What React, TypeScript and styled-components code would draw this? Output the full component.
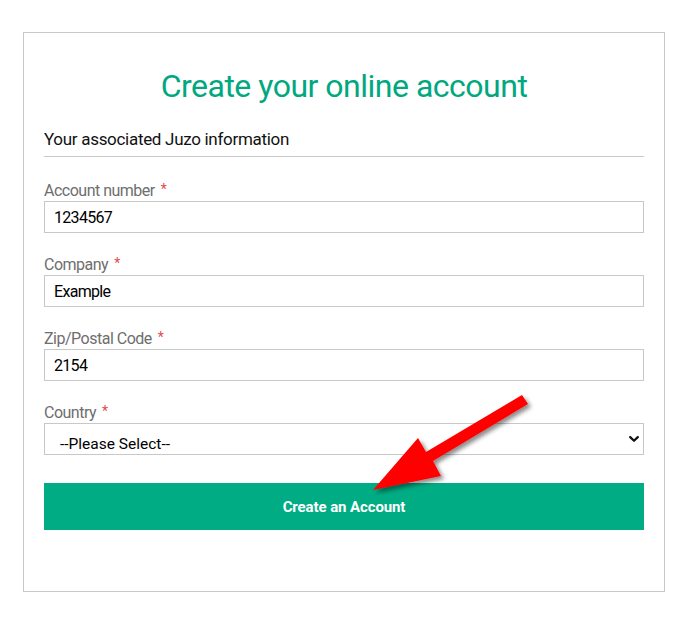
import React from "react";
import styled, { createGlobalStyle } from "styled-components";

const GlobalStyle = createGlobalStyle`
  html, body {
    margin: 0;
    padding: 0;
    background: #ffffff;
  }
  body {
    font-family: "Roboto", "Liberation Sans", sans-serif;
  }
`;

const Page = styled.div`
  width: 682px;
  height: 617px;
  padding: 32px 0 0 23px;
  box-sizing: border-box;
`;

const Card = styled.div`
  position: relative;
  width: 642px;
  height: 560px;
  box-sizing: border-box;
  border: 1px solid #c8c8c8;
  padding: 31px 20px 0 20px;
`;

const Title = styled.h1`
  margin: 0;
  text-align: center;
  font-family: "Roboto", sans-serif;
  font-weight: 400;
  font-size: 32px;
  letter-spacing: -0.5px;
  line-height: 44px;
  color: #00a880;
`;

const SectionHeading = styled.h2`
  margin: 20px 0 0 0;
  padding-bottom: 5px;
  border-bottom: 1px solid #c8c8c8;
  font-family: "Roboto", sans-serif;
  font-weight: 400;
  font-size: 17px;
  letter-spacing: -0.3px;
  line-height: 23px;
  color: #111111;
`;

const Form = styled.form`
  display: flex;
  flex-direction: column;
  margin-top: 21px;
`;

const Field = styled.div`
  display: flex;
  flex-direction: column;
  margin-bottom: 19px;
`;

const Label = styled.label`
  display: block;
  height: 22px;
  margin-bottom: 1px;
  font-size: 16px;
  letter-spacing: -0.5px;
  line-height: 22px;
  color: #6e6e6e;
`;

const Required = styled.span`
  color: #e24b4b;
  font-size: 14px;
  margin-left: 6px;
  vertical-align: 2px;
`;

const TextInput = styled.input`
  height: 32px;
  box-sizing: border-box;
  border: 1px solid #c8c8c8;
  border-radius: 0;
  padding: 1px 9px 0 9px;
  font-family: "Roboto", sans-serif;
  font-size: 16px;
  letter-spacing: -0.7px;
  color: #000000;
  background: #ffffff;
  outline: none;
`;

const SelectWrap = styled.div`
  position: relative;
  height: 32px;
`;

const Select = styled.select`
  width: 100%;
  height: 32px;
  box-sizing: border-box;
  border: 1px solid #c8c8c8;
  border-radius: 0;
  padding: 8px 30px 0 15px;
  appearance: none;
  -webkit-appearance: none;
  font-family: "Roboto", sans-serif;
  font-size: 15.5px;
  letter-spacing: 0;
  line-height: 24px;
  color: #000000;
  background: #ffffff;
  outline: none;
`;

const Chevron = styled.svg`
  position: absolute;
  right: 5px;
  top: 13px;
  width: 10px;
  height: 6px;
  pointer-events: none;
`;

const SubmitButton = styled.button`
  margin-top: 9px;
  height: 47px;
  border: none;
  border-radius: 0;
  background: #00ac83;
  color: #ffffff;
  font-family: "Roboto", sans-serif;
  font-weight: 700;
  font-size: 15px;
  letter-spacing: -0.1px;
  cursor: pointer;
`;

const ArrowOverlay = styled.svg`
  position: absolute;
  left: 337px;
  top: 353px;
  width: 190px;
  height: 125px;
  overflow: visible;
  pointer-events: none;
`;

type FieldDef = { label: string; value: string };

const fields: FieldDef[] = [
  { label: "Account number", value: "1234567" },
  { label: "Company", value: "Example" },
  { label: "Zip/Postal Code", value: "2154" },
];

export default function App() {
  return (
    <>
      <GlobalStyle />
      <Page>
        <Card>
          <Title>Create your online account</Title>
          <SectionHeading>Your associated Juzo information</SectionHeading>
          <Form onSubmit={(e) => e.preventDefault()}>
            {fields.map((f) => (
              <Field key={f.label}>
                <Label>
                  {f.label}
                  <Required>*</Required>
                </Label>
                <TextInput defaultValue={f.value} />
              </Field>
            ))}
            <Field>
              <Label>
                Country
                <Required>*</Required>
              </Label>
              <SelectWrap>
                <Select defaultValue="">
                  <option value="">--Please Select--</option>
                  <option value="us">United States</option>
                  <option value="ca">Canada</option>
                </Select>
                <Chevron viewBox="0 0 10 6">
                  <path
                    d="M1.2 1.1 L5 4.8 L8.8 1.1"
                    fill="none"
                    stroke="#111"
                    strokeWidth="2.2"
                    strokeLinecap="round"
                    strokeLinejoin="round"
                  />
                </Chevron>
              </SelectWrap>
            </Field>
            <SubmitButton type="submit">Create an Account</SubmitButton>
          </Form>
          <ArrowOverlay viewBox="0 0 190 125">
            <defs>
              <filter id="arrowShadow" x="-20%" y="-20%" width="150%" height="150%">
                <feDropShadow dx="3" dy="3" stdDeviation="2" floodColor="#000" floodOpacity="0.45" />
              </filter>
            </defs>
            <polygon
              points="161,9 167,18 72,75 80,90 12,104 57,52 65,66"
              fill="#ff0000"
              filter="url(#arrowShadow)"
            />
          </ArrowOverlay>
        </Card>
      </Page>
    </>
  );
}
